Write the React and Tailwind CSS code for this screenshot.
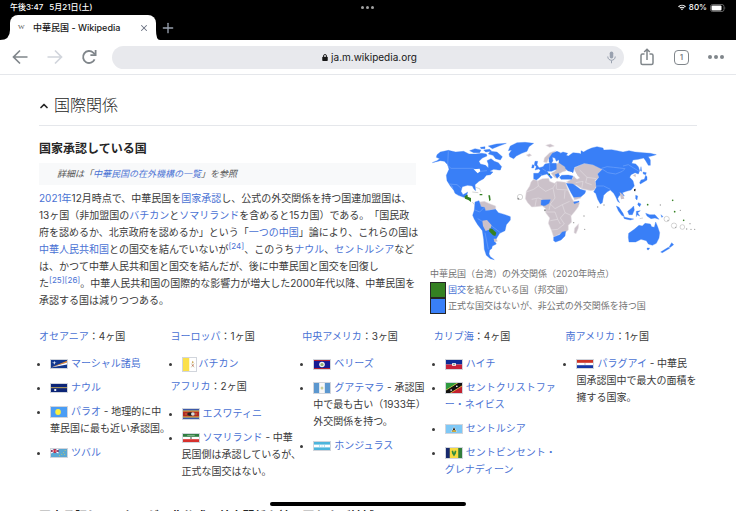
import { ChevronUp, Plus, X } from "lucide-react";

const Flag = ({ height = "h-[10px]", children }) => (
    <svg
        viewBox="0 0 34 20"
        preserveAspectRatio="none"
        aria-hidden="true"
        className={`inline-block align-middle w-[18px] mr-[3px] border border-gray-300 ${height}`}
    >
        {children}
    </svg>
);

const flags = {
    marshall: (
        <Flag>
            <rect width="34" height="20" fill="#12388f" />
            <path d="M0 19 L34 2 V6 Z" fill="#e88b2e" />
            <path d="M0 19 L34 6 V11 Z" fill="#fff" />
            <path d="M7 2 L8 6 L12 7 L8 8 L7 12 L6 8 L2 7 L6 6 Z" fill="#fff" />
        </Flag>
    ),
    nauru: (
        <Flag>
            <rect width="34" height="20" fill="#0c2577" />
            <rect y="8" width="34" height="2.4" fill="#c9ae5a" />
            <circle cx="9" cy="15" r="2.6" fill="#fff" />
        </Flag>
    ),
    palau: (
        <Flag height="h-[12px]">
            <rect width="34" height="20" fill="#4a9df5" />
            <ellipse cx="15" cy="10" rx="6" ry="6" fill="#fdf03c" />
        </Flag>
    ),
    tuvalu: (
        <Flag>
            <rect width="34" height="20" fill="#5aa7d3" />
            <rect width="16" height="10" fill="#27408f" />
            <path d="M0 0 L16 10 M16 0 L0 10" stroke="#fff" strokeWidth="3" />
            <path d="M8 0 V10 M0 5 H16" stroke="#d32f3e" strokeWidth="3" />
            <g fill="#e6d84a">
                <circle cx="18" cy="17" r="1.2" />
                <circle cx="23" cy="13" r="1.2" />
                <circle cx="27" cy="9" r="1.2" />
                <circle cx="30" cy="4" r="1.2" />
                <circle cx="29" cy="14" r="1.2" />
            </g>
        </Flag>
    ),
    eswatini: (
        <Flag height="h-[12px]">
            <rect width="34" height="20" fill="#3b58a8" />
            <rect y="3" width="34" height="14" fill="#e5c84a" />
            <rect y="5" width="34" height="10" fill="#b02a25" />
            <path d="M4 10 H30" stroke="#e5c84a" strokeWidth="1" />
            <ellipse cx="17" cy="10" rx="8" ry="3.6" fill="#222" />
            <ellipse cx="21" cy="10" rx="4" ry="3.4" fill="#ddd" />
        </Flag>
    ),
    somaliland: (
        <Flag>
            <rect width="34" height="20" fill="#fff" />
            <rect width="34" height="7" fill="#2f7d40" />
            <rect y="13" width="34" height="7" fill="#d7302c" />
            <path d="M9 3.5 H25" stroke="#b9d9bd" strokeWidth="1.5" />
            <circle cx="17" cy="10" r="1.8" fill="#333" />
        </Flag>
    ),
    belize: (
        <Flag height="h-[11px]">
            <rect width="34" height="20" fill="#171a93" />
            <rect width="34" height="2" fill="#c8242b" />
            <rect y="18" width="34" height="2" fill="#c8242b" />
            <circle cx="17" cy="10" r="6" fill="#f3f3f3" />
            <circle cx="17" cy="10" r="3.4" fill="#8fae74" />
        </Flag>
    ),
    guatemala: (
        <Flag height="h-[12px]">
            <rect width="34" height="20" fill="#5b97cf" />
            <rect x="11" width="12" height="20" fill="#f8f8f8" />
            <circle cx="17" cy="10" r="3" fill="#c8cf9d" />
        </Flag>
    ),
    honduras: (
        <Flag>
            <rect width="34" height="20" fill="#4db5dc" />
            <rect y="6.5" width="34" height="7" fill="#fff" />
            <g fill="#4db5dc">
                <circle cx="17" cy="10" r="1" />
                <circle cx="12" cy="8.5" r="1" />
                <circle cx="22" cy="8.5" r="1" />
                <circle cx="12" cy="11.5" r="1" />
                <circle cx="22" cy="11.5" r="1" />
            </g>
        </Flag>
    ),
    haiti: (
        <Flag height="h-[11px]">
            <rect width="34" height="10" fill="#0d2b96" />
            <rect y="10" width="34" height="10" fill="#c7213a" />
            <rect x="13" y="7" width="8" height="6" fill="#fff" />
            <circle cx="17" cy="10" r="1.8" fill="#6e9268" />
        </Flag>
    ),
    kitts: (
        <Flag height="h-[12px]">
            <path d="M0 0 H34 L0 20 Z" fill="#2f9a41" />
            <path d="M34 0 V20 H0 Z" fill="#c3212f" />
            <path d="M0 20 L34 0" stroke="#f2dc4c" strokeWidth="11" />
            <path d="M0 20 L34 0" stroke="#111" strokeWidth="8.5" />
            <circle cx="11" cy="14" r="1.7" fill="#fff" />
            <circle cx="23" cy="6.5" r="1.7" fill="#fff" />
        </Flag>
    ),
    lucia: (
        <Flag>
            <rect width="34" height="20" fill="#7ec8f6" />
            <path d="M17 3 L23 17 H11 Z" fill="#fff" />
            <path d="M17 5 L21.5 17 H12.5 Z" fill="#222" />
            <path d="M17 12 L23 17 H11 Z" fill="#eec43d" />
        </Flag>
    ),
    vincent: (
        <Flag height="h-[12px]">
            <rect width="34" height="20" fill="#f6da3f" />
            <rect width="8" height="20" fill="#16296e" />
            <rect x="26" width="8" height="20" fill="#327d3b" />
            <path d="M12 6 L15 5 L17 10 L19 5 L22 6 L21 11 L17 17 L13 11 Z" fill="#2f8c3b" />
        </Flag>
    ),
    paraguay: (
        <Flag>
            <rect width="34" height="20" fill="#fff" />
            <rect width="34" height="7" fill="#cc3427" />
            <rect y="13" width="34" height="7" fill="#1638a6" />
            <circle cx="17" cy="10" r="1.8" fill="#bbb" />
        </Flag>
    ),
    vatican: (
        <svg
            viewBox="0 0 28 28"
            aria-hidden="true"
            className="inline-block align-middle w-[15px] h-[15px] mr-[2px] border border-gray-300"
        >
            <rect width="14" height="28" fill="#fbe04b" />
            <rect x="14" width="14" height="28" fill="#fff" />
            <path d="M21 6 L23 9 L21 12 L19 9 Z" fill="#c9a54e" />
            <path d="M18 12 L24 20 M24 12 L18 20" stroke="#b49a66" strokeWidth="1.4" />
            <circle cx="21" cy="16" r="1.2" fill="#c66" />
        </svg>
    ),
};

const A = ({ children }) => (
    <a href="#" className="text-[#4a72d4]">{children}</a>
);

const regions = [
    [
        {
            name: "オセアニア",
            count: 4,
            items: [
                { flag: "marshall", lines: ["マーシャル諸島"] },
                { flag: "nauru", lines: ["ナウル"] },
                { flag: "palau", lines: ["パラオ"], note: " - 地理的に中華民国に最も近い承認国。" },
                { flag: "tuvalu", lines: ["ツバル"] },
            ],
        },
    ],
    [
        { name: "ヨーロッパ", count: 1, items: [{ flag: "vatican", lines: ["バチカン"] }] },
        {
            name: "アフリカ",
            count: 2,
            items: [
                { flag: "eswatini", lines: ["エスワティニ"] },
                { flag: "somaliland", lines: ["ソマリランド"], note: " - 中華民国側は承認しているが、正式な国交はない。" },
            ],
        },
    ],
    [
        {
            name: "中央アメリカ",
            count: 3,
            items: [
                { flag: "belize", lines: ["ベリーズ"] },
                { flag: "guatemala", lines: ["グアテマラ"], note: " - 承認国中で最も古い（1933年）外交関係を持つ。" },
                { flag: "honduras", lines: ["ホンジュラス"] },
            ],
        },
    ],
    [
        {
            name: "カリブ海",
            count: 4,
            items: [
                { flag: "haiti", lines: ["ハイチ"] },
                { flag: "kitts", lines: ["セントクリストファ", "ー・ネイビス"] },
                { flag: "lucia", lines: ["セントルシア"] },
                { flag: "vincent", lines: ["セントビンセント・", "グレナディーン"] },
            ],
        },
    ],
    [
        {
            name: "南アメリカ",
            count: 1,
            items: [
                { flag: "paraguay", lines: ["パラグアイ"], note: " - 中華民国承認国中で最大の面積を擁する国家。" },
            ],
        },
    ],
];

function WorldMap() {
    return (
        <svg viewBox="15 12 801 369" role="img" aria-label="中華民国（台湾）の外交関係" className="block w-full">
            {/* no relations */}
            <g fill="#cbc1c9" stroke="#e6e0e5" strokeWidth="1.5" strokeLinejoin="round">
                <path d="M325 130 L338 134 L352 128 L371 127 L374 136 L388 142 L396 136 L422 139 L424 148 L432 168 L440 186 L446 196 L464 200 L460 212 L450 226 L438 240 L440 258 L430 268 L430 282 L420 290 L404 294 L386 304 L380 285 L370 262 L374 246 L362 230 L362 218 L352 210 L334 212 L320 213 L308 200 L301 188 L304 166 L314 150 L318 138 Z" />
                <path d="M447 290 L449 276 L461 263 L460 276 L453 293 Z" />
                <path d="M447 96 L478 82 L505 86 L533 98 L518 114 L522 124 L510 134 L514 150 L508 162 L498 164 L470 158 L455 148 L438 146 L424 138 L442 128 L446 120 L456 130 L464 126 L452 112 Z" />
                <path d="M390 88 L402 78 L412 84 L424 94 L424 104 L412 108 L402 114 L398 128 L388 124 L378 112 L392 104 Z" />
                <path d="M356 78 L358 66 L374 50 L392 44 L380 56 L370 70 L366 80 Z" />
                <path d="M304 57 L314 53 L320 58 L311 62 Z M362 28 L376 24 L388 30 L374 34 Z" />
                <path d="M164 198 L178 196 L196 204 L212 210 L212 220 L196 222 L182 224 L176 214 L166 212 Z" />
                <path d="M446 184 L466 180 L468 186 L448 192 Z" />
            </g>
            {/* unofficial relations */}
            <g fill="#397ff7" stroke="#397ff7" strokeWidth="1" strokeLinejoin="round">
                <path d="M22 80 L36 74 L44 68 L34 64 L36 56 L46 48 L70 43 L92 48 L116 46 L132 54 L152 54 L170 52 L184 54 L186 60 L172 66 L162 76 L166 84 L182 88 L190 96 L190 84 L186 74 L198 68 L208 76 L220 80 L230 92 L224 102 L206 100 L194 106 L204 108 L196 116 L184 118 L176 128 L162 136 L150 146 L152 164 L147 160 L142 150 L128 148 L112 152 L108 166 L114 176 L122 172 L128 168 L124 182 L116 184 L100 178 L90 172 L82 152 L76 144 L86 162 L76 150 L66 134 L64 118 L72 100 L68 86 L58 76 L46 74 Z" />
                <path d="M134 44 L150 38 L168 42 L164 50 L146 50 Z M176 42 L194 40 L200 46 L182 48 Z M190 30 L214 24 L244 22 L222 30 L202 38 Z M196 46 L216 48 L232 62 L226 72 L212 68 L204 58 L190 54 Z M166 34 L180 32 L180 38 L168 38 Z M216 96 L228 94 L226 102 L216 100 Z" />
                <path d="M250 44 L256 30 L276 20 L300 19 L326 22 L312 32 L306 46 L290 52 L274 60 L266 68 L254 62 L252 54 L260 42 Z" />
                <path d="M150 198 L162 194 L168 212 L178 214 L182 224 L198 222 L212 220 L220 230 L240 236 L256 242 L256 252 L244 266 L240 284 L224 292 L214 308 L208 314 L214 324 L202 330 L200 338 L194 342 L192 354 L196 362 L208 371 L196 368 L184 358 L178 340 L176 310 L172 284 L158 266 L148 250 L143 238 L148 222 Z" />
                <path d="M326 112 L340 112 L350 118 L342 126 L334 132 L326 128 Z M340 96 L354 92 L360 84 L372 82 L394 82 L394 100 L380 106 L366 106 L372 114 L382 124 L378 128 L366 114 L352 118 L340 112 L346 104 Z M330 76 L338 76 L336 86 L344 98 L330 102 L334 92 L328 86 Z M322 86 L328 88 L326 96 L320 96 Z" />
                <path d="M372 78 L372 66 L382 52 L396 46 L406 50 L404 70 L394 76 L390 66 L382 64 L384 74 L378 84 Z M390 116 L400 112 L404 120 L396 126 Z" />
                <path d="M404 124 L410 118 L430 117 L444 120 L440 130 L420 130 L408 130 Z" />
                <path d="M402 80 L402 54 L414 48 L428 52 L424 58 L430 60 L444 50 L462 52 L468 54 L468 44 L476 48 L486 42 L500 36 L516 32 L534 36 L536 42 L560 41 L576 44 L594 48 L612 44 L630 48 L654 50 L676 52 L694 56 L680 60 L670 62 L676 72 L676 88 L670 88 L662 74 L656 66 L640 70 L624 72 L620 82 L632 84 L640 92 L644 104 L640 114 L630 110 L618 116 L614 124 L624 134 L628 150 L618 162 L604 166 L592 170 L598 180 L588 176 L582 180 L578 188 L584 200 L578 196 L572 182 L566 172 L556 162 L546 168 L536 178 L532 200 L526 204 L518 190 L512 172 L506 168 L514 154 L512 136 L522 124 L518 114 L532 100 L504 86 L478 82 L448 94 L444 110 L430 106 L422 98 L420 92 Z" />
                <path d="M424 142 L444 144 L456 152 L466 160 L482 164 L480 172 L468 182 L446 184 L438 170 Z" />
                <path d="M349 192 L376 191 L372 202 L362 208 L356 209 L348 206 Z M386 304 L404 296 L412 288 L422 286 L420 300 L408 312 L392 318 L386 314 Z M446 198 L462 195 L462 198 L448 203 Z" />
                <path d="M644 140 L648 132 L658 130 L662 118 L666 122 L666 132 L656 138 L646 144 Z M654 108 L664 110 L662 116 L655 114 Z M648 92 L650 106 L646 104 Z" />
                <path d="M574 210 L582 214 L594 232 L598 242 L590 238 L580 224 Z M596 243 L614 247 L626 249 L616 252 L598 248 Z M608 226 L618 218 L626 210 L628 222 L622 236 L612 236 Z M634 226 L646 224 L638 230 L644 240 L636 236 L634 242 Z M632 178 L638 180 L636 192 L632 188 Z M640 200 L648 204 L644 212 L638 206 Z M662 232 L674 236 L690 236 L702 250 L690 246 L678 248 L666 240 Z M708 236 L714 242 L710 244 Z" />
                <path d="M611 292 L628 280 L642 268 L652 270 L660 262 L676 264 L680 272 L688 274 L692 258 L698 272 L704 290 L702 306 L694 322 L682 328 L670 324 L664 314 L648 310 L632 318 L612 318 L610 304 Z M666 336 L674 336 L670 342 L667 341 Z M740 320 L746 326 L736 334 L732 334 Z M730 334 L734 337 L712 350 L707 348 Z" />
            </g>
            {/* Bolivia, Uruguay, Laos, Cambodia and North Korea */}
            <path d="M172 254 L186 252 L200 268 L196 280 L182 285 L174 270 Z M206 308 L214 308 L218 316 L208 318 Z M584 168 L594 176 L598 188 L588 190 Z M624 118 L632 114 L632 124 Z" fill="#cbc1c9" />
            {/* inner borders and waters */}
            <g fill="none" stroke="#6fa3fb" strokeWidth="2">
                <path d="M78 97 H142 L156 102 L166 106 L186 104 M78 97 L68 88 L70 46 M72 144 L96 146 L110 158" />
                <path d="M530 97 L546 92 L566 94 L584 96 L600 98 L592 106 L572 114 L548 110 L530 98 M594 90 L610 86 L626 96 L642 106 M514 150 L536 150 L556 160 M150 222 L164 228 L178 214 M158 248 L172 256 M190 340 L180 290 M200 270 L226 290 M352 98 L364 106 M374 84 L374 104" />
            </g>
            <g fill="none" stroke="#e9e4e8" strokeWidth="1.5">
                <path d="M304 168 L326 160 L340 150 L362 166 L384 156 L394 140 M340 150 L338 134 M320 190 L340 186 L352 190 M384 156 L390 186 L376 204 L390 218 L412 206 L434 196 M396 160 L430 162 M394 140 V160 M418 188 L420 164 M362 228 L390 228 L398 250 L376 254 M412 206 L420 230 L406 246 L418 264 L398 280 L378 282 M438 238 L420 230 M398 250 L406 264 M330 212 L334 190 M376 204 L372 222 M464 102 L486 124 L514 128 M470 158 L474 136 L452 140 M486 124 L482 140 L500 146" />
            </g>
            <path d="M146 100 L164 98 L166 106 L158 112 L152 106 Z M428 106 L440 108 L446 116 L424 114 Z M450 106 L456 116 L454 128 L448 118 Z" fill="#fff" />
            {/* official relations */}
            <g fill="#348022">
                <path d="M118 182 L124 177 L128 176 L128 182 L138 186 L138 198 L130 192 L120 188 Z" />
                <path d="M194 277 L202 279 L214 290 L211 300 L204 298 L192 286 Z" />
                <path d="M164 174 H172 V178 H164 Z M190 178 H195 L197 192 L193 196 Z" />
                <circle cx="668" cy="206" r="2.5" />
                <circle cx="743" cy="193" r="2.5" />
                <circle cx="749" cy="227" r="2.5" />
                <circle cx="776" cy="253" r="2.5" />
                <circle cx="373" cy="115" r="2.5" />
            </g>
            <path d="M627 160 L632 158 L631 166 L627 165 Z" fill="#222" />
            <g fill="none" stroke="#aaa" strokeWidth="1.5">
                <circle cx="285" cy="183" r="8" />
                <circle cx="725" cy="249" r="8" />
                <circle cx="747" cy="269" r="8" />
                <circle cx="772" cy="273" r="7" />
                <path d="M152 154 L164 158 L168 168 M142 168 L160 170 M142 198 L148 206 M644 248 L654 246" />
            </g>
            <g fill="#999">
                <circle cx="280" cy="188" r="3" />
                <circle cx="360" cy="223" r="3" />
                <circle cx="518" cy="213" r="2" />
                <circle cx="537" cy="207" r="2" />
                <circle cx="477" cy="240" r="2" />
                <circle cx="479" cy="280" r="2" />
                <circle cx="446" cy="260" r="2" />
                <circle cx="706" cy="207" r="2" />
                <circle cx="766" cy="223" r="2" />
                <circle cx="795" cy="263" r="2" />
                <circle cx="785" cy="279" r="2" />
                <circle cx="798" cy="280" r="2" />
                <circle cx="809" cy="280" r="2" />
                <circle cx="752" cy="274" r="2" />
                <circle cx="729" cy="253" r="2" />
            </g>
        </svg>
    );
}

function StatusBar() {
    return (
        <div className="grid grid-cols-3 items-center h-[15px] px-[10px] text-[8px] leading-[15px] font-medium text-white">
            <div className="flex gap-[6px]">
                <span>午後3:47</span>
                <span>5月21日(土)</span>
            </div>
            <div className="flex justify-center gap-[2px]">
                <span className="size-[3px] rounded-full bg-neutral-400" />
                <span className="size-[3px] rounded-full bg-neutral-400" />
                <span className="size-[3px] rounded-full bg-neutral-400" />
            </div>
            <div className="flex items-center justify-end gap-[3px]">
                <svg viewBox="0 0 16 12" className="w-2 h-[7px]" fill="none" stroke="#fff" strokeWidth="2.2" aria-hidden="true">
                    <path d="M1 4.5 C5 0.5 11 0.5 15 4.5 M3.6 7.4 C6 5 10 5 12.4 7.4" />
                    <path d="M5.8 9 Q8 7.4 10.2 9 L8 11.6 Z" fill="#fff" stroke="none" />
                </svg>
                <span>80%</span>
                <svg viewBox="0 0 32 16" className="w-4 h-2" aria-hidden="true">
                    <rect x="1" y="1" width="27" height="14" rx="4" fill="none" stroke="#888" strokeWidth="1.4" />
                    <rect x="3" y="3" width="20" height="10" rx="2" fill="#fff" />
                    <path d="M29.5 6 Q32 8 29.5 10 Z" fill="#888" />
                </svg>
            </div>
        </div>
    );
}

function TabStrip() {
    return (
        <div className="flex items-stretch h-[25px]">
            <svg viewBox="0 0 10 25" className="w-[10px] h-[25px]" aria-hidden="true">
                <path d="M10 15 Q10 25 0 25 H10 Z" fill="#fff" />
            </svg>
            <div className="flex items-center w-[146px] pl-2 pr-[7px] bg-white rounded-t-lg">
                <span className="w-[15px] font-['Liberation_Serif',serif] text-[7px] leading-none text-neutral-600">W</span>
                <span className="flex-1 text-[9px] font-medium text-neutral-900 whitespace-nowrap">中華民国 - Wikipedia</span>
                <button aria-label="タブを閉じる" className="text-gray-500">
                    <X className="size-[10px]" strokeWidth={2.5} />
                </button>
            </div>
            <svg viewBox="0 0 10 25" className="w-1 h-[25px]" preserveAspectRatio="none" aria-hidden="true">
                <path d="M0 15 Q0 25 10 25 H0 Z" fill="#fff" />
            </svg>
            <button aria-label="新しいタブ" className="text-gray-400">
                <Plus className="size-4" strokeWidth={2} />
            </button>
        </div>
    );
}

function Toolbar() {
    return (
        <div className="flex items-center h-[35px] px-3 border-b border-gray-200 bg-white text-[#80868b]">
            <button aria-label="戻る" className="mr-[14px]">
                <svg viewBox="0 0 20 20" className="size-5" fill="none" stroke="currentColor" strokeWidth="1.7" aria-hidden="true">
                    <path d="M15.5 10 H1.8 M8 3.5 L1.5 10 L8 16.5" />
                </svg>
            </button>
            <button aria-label="進む" className="mr-[14px] text-gray-300">
                <svg viewBox="0 0 20 20" className="size-5" fill="none" stroke="currentColor" strokeWidth="1.7" aria-hidden="true">
                    <path d="M1.5 10 H15.2 M9 3.5 L15.5 10 L9 16.5" />
                </svg>
            </button>
            <button aria-label="再読み込み" className="mr-3">
                <svg viewBox="0 0 20 20" className="size-5" fill="none" stroke="currentColor" strokeWidth="1.8" aria-hidden="true">
                    <path d="M14.6 12.4 A6 6 0 1 1 13.2 5.6 L15 7.4" />
                    <path d="M15.6 3 V8.2 H10.4" />
                </svg>
            </button>
            <div className="flex flex-1 items-center h-[23px] pl-5 pr-2 rounded-full bg-[#e8e9ed]">
                <label className="flex flex-1 items-center justify-center gap-[3px] text-neutral-900">
                    <svg viewBox="0 0 12 14" className="w-[6px] h-[7px]" aria-hidden="true">
                        <rect x="0.5" y="5.5" width="11" height="8.5" rx="1.5" fill="currentColor" />
                        <path d="M3 6 V4 A3 3 0 0 1 9 4 V6" fill="none" stroke="currentColor" strokeWidth="1.8" />
                    </svg>
                    <input
                        type="text"
                        aria-label="アドレス"
                        defaultValue="ja.m.wikipedia.org"
                        className="field-sizing-content bg-transparent text-[10px] leading-[14px] outline-none"
                    />
                </label>
                <button aria-label="音声検索" className="text-gray-400">
                    <svg viewBox="0 0 18 26" className="w-[9px] h-[13px]" aria-hidden="true">
                        <rect x="5.5" y="1" width="7" height="14" rx="3.5" fill="currentColor" />
                        <path d="M1.5 11 C1.5 21 16.5 21 16.5 11 M9 19 V24.5" fill="none" stroke="currentColor" strokeWidth="2" />
                    </svg>
                </button>
            </div>
            <button aria-label="共有" className="ml-[15px]">
                <svg viewBox="0 0 16 20" className="w-4 h-5" fill="none" stroke="currentColor" strokeWidth="1.5" aria-hidden="true">
                    <path d="M5.5 7 H3.5 Q2 7 2 8.5 V16 Q2 17.5 3.5 17.5 H12.5 Q14 17.5 14 16 V8.5 Q14 7 12.5 7 H10.5" />
                    <path d="M8 13 V2.5 M5.2 5 L8 2.2 L10.8 5" />
                </svg>
            </button>
            <button
                aria-label="タブ一覧"
                className="flex items-center justify-center ml-[19px] size-[15px] rounded border border-[#80868b] text-[7px] font-bold leading-none"
            >
                1
            </button>
            <button aria-label="メニュー" className="flex gap-[2px] ml-[19px]">
                <span className="size-1 rounded-full bg-[#80868b]" />
                <span className="size-1 rounded-full bg-[#80868b]" />
                <span className="size-1 rounded-full bg-[#80868b]" />
            </button>
        </div>
    );
}

function Region({ region }) {
    return (
        <>
            <p>
                <A>{region.name}</A>：{region.count}ヶ国
            </p>
            <ul className="list-disc pl-[11px] mt-[10px] mb-[6px] space-y-[7px]">
                {region.items.map((item) => (
                    <li key={item.flag}>
                        {flags[item.flag]}
                        <A>
                            {item.lines[0]}
                            {item.lines[1] && <br />}
                            {item.lines[1]}
                        </A>
                        {item.note}
                    </li>
                ))}
            </ul>
        </>
    );
}

export default function App() {
    return (
        <div lang="ja" className="relative flex flex-col h-screen overflow-hidden bg-white font-[Inter,'Noto_Sans_CJK_JP',sans-serif] [text-spacing-trim:space-all]">
            <header className="shrink-0">
                <div className="bg-black">
                    <StatusBar />
                    <TabStrip />
                </div>
                <Toolbar />
            </header>

            <main className="flex-1 min-h-0 overflow-hidden px-[39px] pt-[18px] text-[10px] leading-[17px] text-[#3a3a3a]">
                <h2 className="flex items-center gap-1 pb-[6px] border-b border-gray-200 font-light text-[16px] leading-[26px] text-neutral-800 font-['Liberation_Serif','Noto_Sans_CJK_JP',serif]">
                    <ChevronUp className="size-3 -ml-px" strokeWidth={3.5} />
                    国際関係
                </h2>

                <div className="flex gap-[10px] mt-[14px]">
                    <div className="flex-1 min-w-0">
                        <h3 className="text-[12px] leading-[17px] font-bold text-neutral-800">国家承認している国</h3>
                        <div className="mt-[6px] mb-[5px] mr-1 h-[22px] pl-[18px] bg-[#f8f9fa] text-[9px] leading-[22px] italic text-neutral-600">
                            詳細は「<A>中華民国の在外機構の一覧</A>」を参照
                        </div>
                        <p>
                            <A>2021年</A>12月時点で、中華民国を<A>国家承認</A>し、公式の外交関係を持つ国連加盟国は、13ヶ国（非加盟国の<A>バチカン</A>と<A>ソマリランド</A>を含めると15カ国）である。「国民政<br />
                            府を認めるか、北京政府を認めるか」という「<A>一つの中国</A>」論により、これらの国は<A>中華人民共和国</A>との国交を結んでいないが<sup className="text-[8px] leading-none"><A>[24]</A></sup>、このうち<A>ナウル</A>、<A>セントルシア</A>などは、かつて中華人民共和国と国交を結んだが、後に中華民国と国交を回復し<br />
                            た<sup className="text-[8px] leading-none"><A>[25]</A><A>[26]</A></sup>。中華人民共和国の国際的な影響力が増大した2000年代以降、中華民国を承認する国は減りつつある。
                        </p>
                    </div>

                    <figure className="w-[267px] text-neutral-500">
                        <WorldMap />
                        <figcaption className="mt-[3px] text-[9px] leading-4">
                            <p>中華民国（台湾）の外交関係（2020年時点）</p>
                            <p className="flex items-center gap-[2px]">
                                <span className="size-4 border border-neutral-800 bg-[#348022]" />
                                <span><A>国交</A>を結んでいる国（邦交國）</span>
                            </p>
                            <p className="flex items-center gap-[2px]">
                                <span className="size-4 border border-neutral-800 bg-[#397ff7]" />
                                <span>正式な国交はないが、非公式の外交関係を持つ国</span>
                            </p>
                        </figcaption>
                    </figure>
                </div>

                <div className="grid grid-cols-5 mt-[14px]">
                    {regions.map((column) => (
                        <div key={column[0].name}>
                            {column.map((region) => (
                                <Region key={region.name} region={region} />
                            ))}
                        </div>
                    ))}
                </div>

                <h3 className="mt-[22px] text-[12px] leading-[17px] font-bold text-neutral-800">
                    国家承認していないが、非公式の外交関係を持つ国および地域
                </h3>
            </main>

            {/* home indicator */}
            <div className="absolute bottom-[5px] left-1/2 -translate-x-1/2 w-[196px] h-1 rounded-full bg-black" />
        </div>
    );
}
